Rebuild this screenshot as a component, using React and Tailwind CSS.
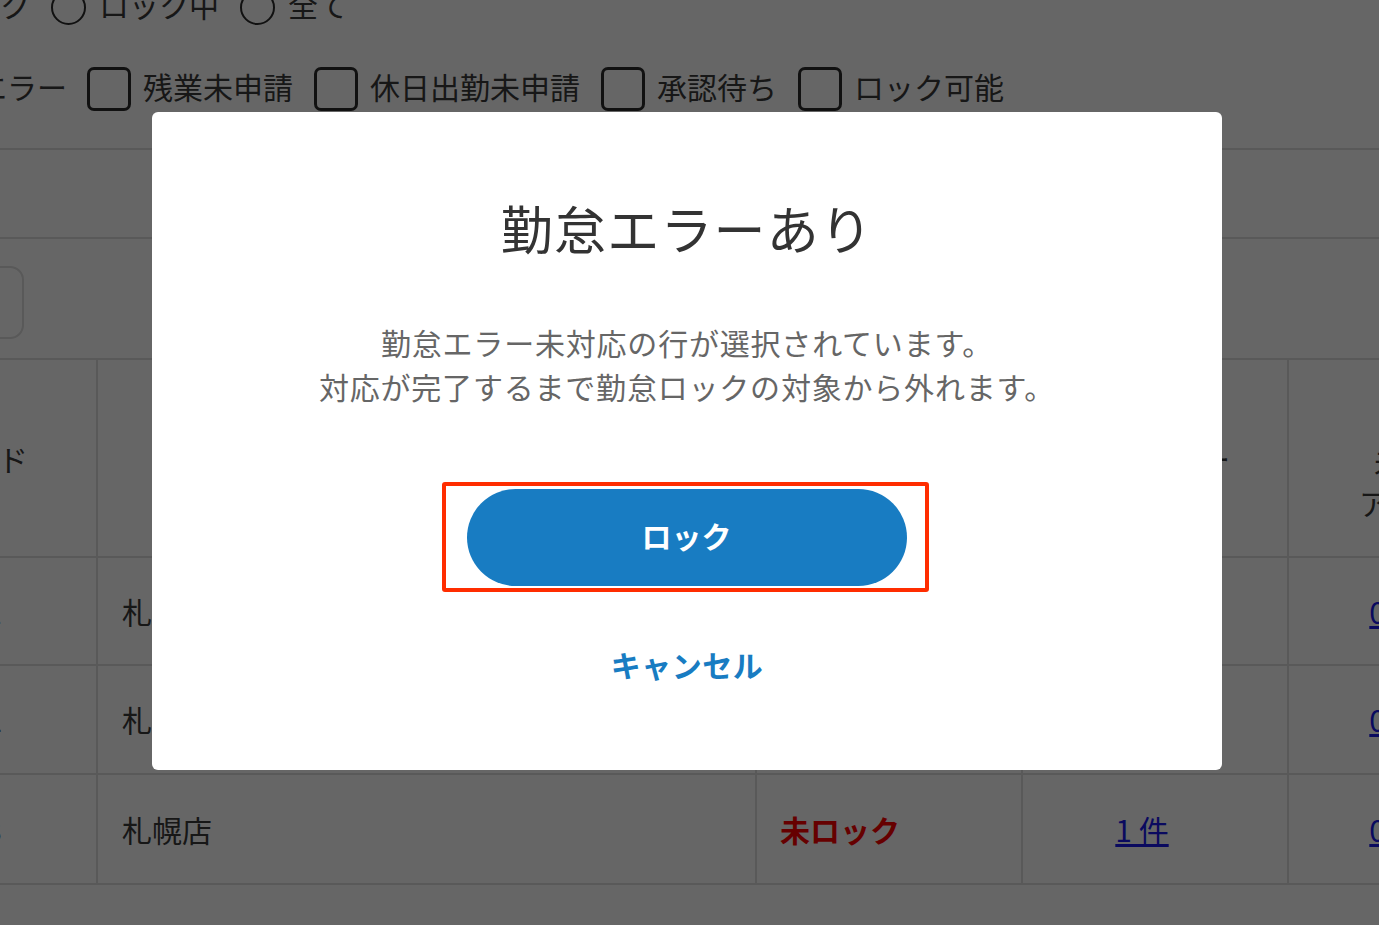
const FONT = { fontFamily: '"Noto Sans CJK JP", "Noto Sans", sans-serif' };

function Radio({ label }) {
  return (
    <div className="flex items-center gap-[13px]">
      <span className="w-[35px] h-[35px] rounded-full border-2 border-[#2b2b2b] bg-white mt-[6px]" />
      <span>{label}</span>
    </div>
  );
}

function Check({ label }) {
  return (
    <div className="flex items-center gap-[12px]">
      <span className="w-[44px] h-[44px] rounded-[7px] border-[3px] border-[#2b2b2b] bg-white" />
      <span className="leading-[32px] mb-[6px]">{label}</span>
    </div>
  );
}

const rows = [
  { code: "0001", name: "札幌店", status: "未ロック", err: "0 件", alert: "0 件", h: "h-[108px]" },
  { code: "0002", name: "札幌店", status: "未ロック", err: "0 件", alert: "0 件", h: "h-[109px]" },
  { code: "0003", name: "札幌店", status: "未ロック", err: "1 件", alert: "0 件", h: "h-[110px]" },
];

function Page() {
  return (
    <div className="-mt-[40px] -ml-[200px] w-[1800px] text-[30px] text-[#3a3a3a]">
      <div className="h-[88px] flex items-center gap-[21px] pl-[62px]">
        <Radio label="未ロック" />
        <Radio label="ロック中" />
        <Radio label="全て" />
      </div>

      <div className="pt-[19px] pb-[37px] flex items-center gap-[21px] pl-[117px] border-b-2 border-[#dedede]">
        <span className="leading-[32px] mb-[6px] -mr-[1px]">勤怠エラー</span>
        <Check label="残業未申請" />
        <Check label="休日出勤未申請" />
        <Check label="承認待ち" />
        <Check label="ロック可能" />
      </div>

      <div className="h-[89px] border-b-2 border-[#dedede]" />

      <div className="pt-[27px] pb-[19px] pl-[24px]">
        <div className="w-[200px] h-[73px] rounded-[14px] border-2 border-[#dedede]" />
      </div>

      <div className="border-t-2 border-[#dedede]">
        <div className="grid grid-cols-[298px_659px_266px_266px_266px] h-[198px] border-b-2 border-[#dedede]">
          <div className="flex items-center justify-end pr-[68px] border-r-2 border-[#dedede]">店舗コード</div>
          <div className="flex items-center justify-center border-r-2 border-[#dedede]">店舗名</div>
          <div className="flex items-center justify-center border-r-2 border-[#dedede]">ロック状態</div>
          <div className="flex items-center justify-center border-r-2 border-[#dedede]">勤怠エラー</div>
          <div className="flex items-center justify-center text-center leading-[42px] pt-[4px] pr-[6px]">
            残業
            <br />
            未申請
            <br />
            アラート
          </div>
        </div>
        {rows.map((r) => (
          <div
            key={r.code}
            className={`grid grid-cols-[298px_659px_266px_266px_266px] ${r.h} border-b-2 border-[#dedede]`}
          >
            <div className="flex items-center justify-end pr-[94px] border-r-2 border-[#dedede]">{r.code}</div>
            <div className="flex items-center pl-[24px] border-r-2 border-[#dedede]">{r.name}</div>
            <div className="flex items-center pl-[23px] border-r-2 border-[#dedede] font-bold text-[#ff0000]">
              {r.status}
            </div>
            <div className="flex items-center justify-center pr-[26px] border-r-2 border-[#dedede]">
              <span className="underline text-[#1a1aee]">{r.err}</span>
            </div>
            <div className="flex items-center justify-center pr-[52px]">
              <span className="underline text-[#1a1aee]">{r.alert}</span>
            </div>
          </div>
        ))}
      </div>
    </div>
  );
}

function Modal() {
  return (
    <div className="fixed left-[152px] top-[112px] w-[1070px] h-[658px] bg-white rounded-md flex flex-col items-center pt-[77px]">
      <h2 className="text-[52px] leading-[78px] font-normal text-[#333] tracking-[1.2px]">勤怠エラーあり</h2>
      <p className="mt-[53px] text-[30px] leading-[44px] text-[#666] text-center tracking-[0.8px]">
        勤怠エラー未対応の行が選択されています。
        <br />
        対応が完了するまで勤怠ロックの対象から外れます。
      </p>
      <div className="mt-[74px] mr-[4px] border-4 border-[#ff2d00] rounded-[3px] pl-[21px] pr-[18px] pt-[3px] pb-[2px]">
        <button className="w-[440px] h-[97px] rounded-full bg-[#187cc2] text-white text-[30px] leading-none font-bold flex items-center justify-center pb-[6px]">
          ロック
        </button>
      </div>
      <button className="mt-[50px] text-[30px] leading-[44px] font-bold text-[#187cc2] tracking-[0.5px]">
        キャンセル
      </button>
    </div>
  );
}

export default function App() {
  return (
    <div className="relative w-screen h-screen overflow-hidden bg-white" style={FONT}>
      <Page />
      <div className="fixed inset-0 bg-black/60" />
      <Modal />
    </div>
  );
}
